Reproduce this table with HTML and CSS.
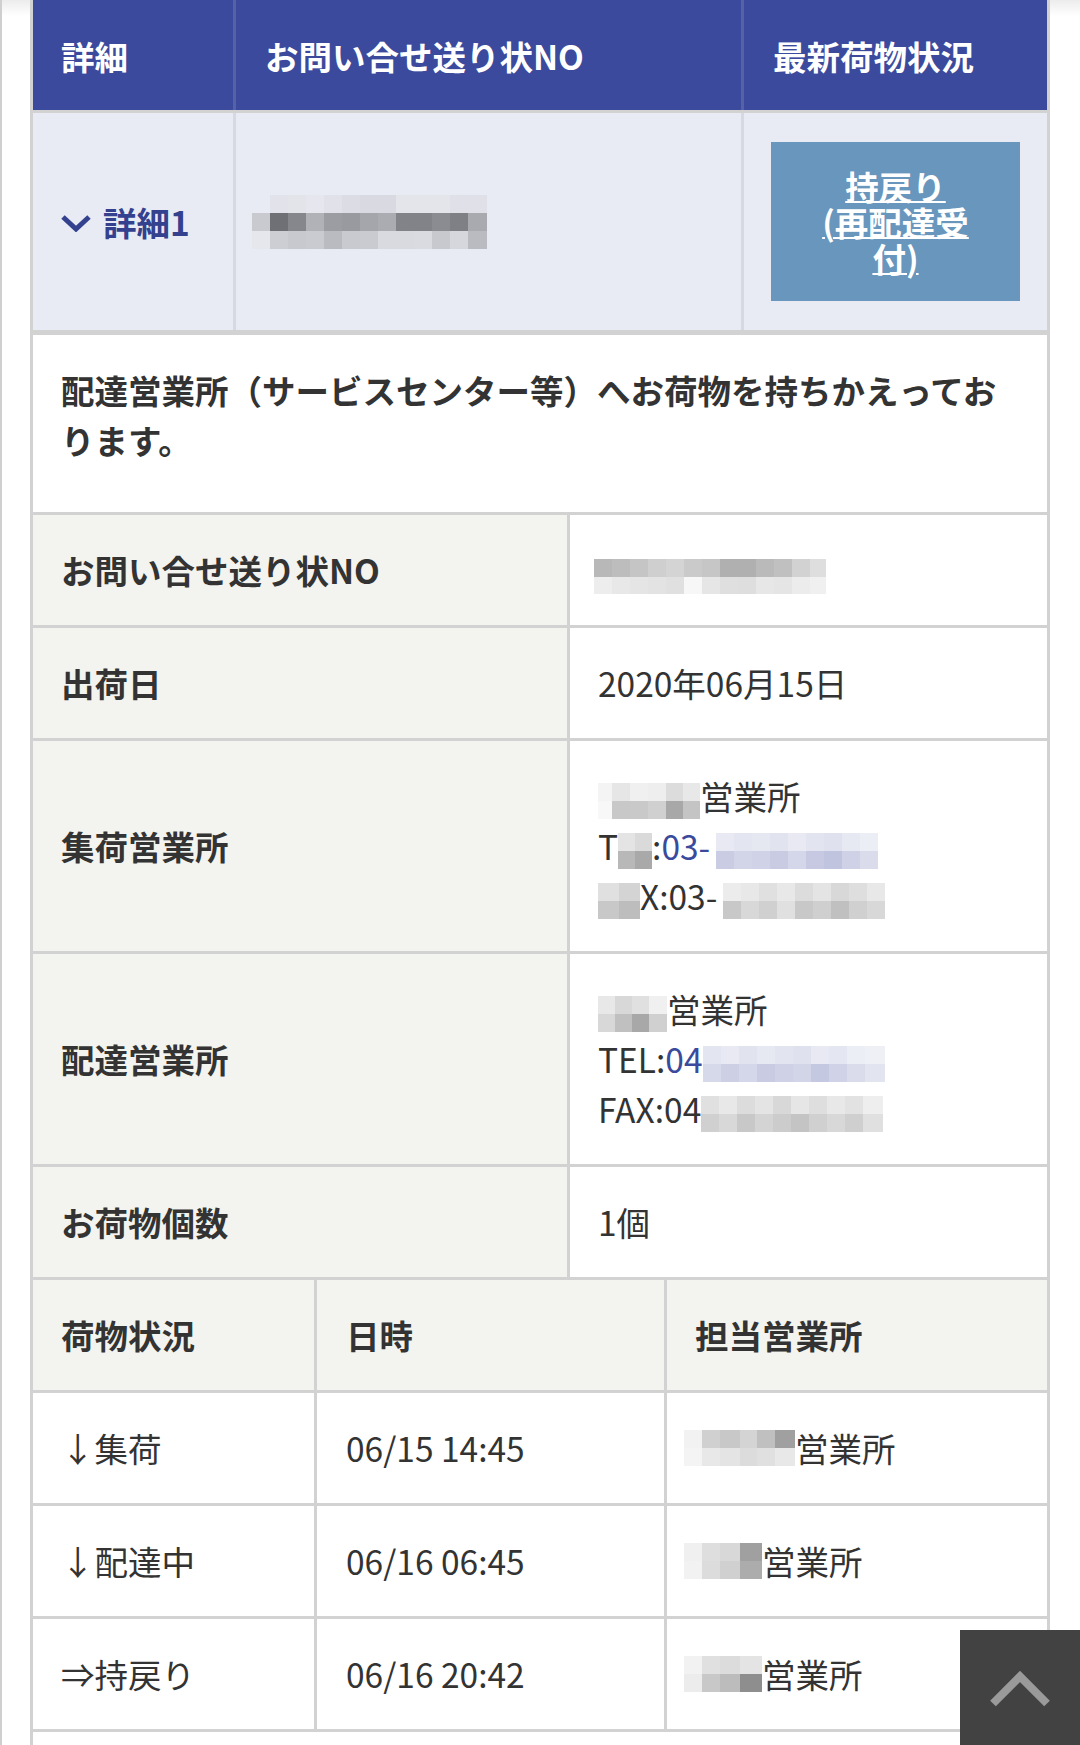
FILE: index.html
```html
<!DOCTYPE html>
<html lang="ja">
<head>
<meta charset="utf-8">
<title>お問い合せ結果</title>
<link rel="stylesheet" href="styles.css">
</head>
<body>
<div class="page">
  <div class="wrap">
    <div class="sum-head">
      <div class="hcell">詳細</div>
      <div class="hcell">お問い合せ送り状NO</div>
      <div class="hcell">最新荷物状況</div>
    </div>
    <div class="sum-row">
      <div class="scell detail">
        <svg class="chev" width="30" height="18" viewBox="0 0 30 18"><polyline points="2,3 15,15 28,3" fill="none" stroke="#33418f" stroke-width="5"/></svg>
        <span>詳細1</span>
      </div>
      <div class="scell track"><span class="mz mz-track"></span></div>
      <div class="scell status">
        <a class="btn" href="#">持戻り<br>(再配達受付)</a>
      </div>
    </div>
    <div class="msg">配達営業所（サービスセンター等）へお荷物を持ちかえっております。</div>
    <div class="def">
      <div class="lbl">お問い合せ送り状NO</div>
      <div class="val"><span class="mz mz-inv"></span></div>
      <div class="lbl">出荷日</div>
      <div class="val">2020年06月15日</div>
      <div class="lbl">集荷営業所</div>
      <div class="val"><div><span class="mz mz-a1"></span>営業所<br>T<span class="mz mz-a2l"></span>:<a class="tel" href="#">03-</a><span class="mz mz-a2r"></span><br><span class="mz mz-a3l"></span>X:03-<span class="mz mz-a3r"></span></div></div>
      <div class="lbl">配達営業所</div>
      <div class="val"><div><span class="mz mz-b1"></span>営業所<br>TEL:<a class="tel" href="#">04</a><span class="mz mz-b2"></span><br>FAX:04<span class="mz mz-b3"></span></div></div>
      <div class="lbl">お荷物個数</div>
      <div class="val">1個</div>
    </div>
    <div class="hist">
      <div class="th">荷物状況</div>
      <div class="th">日時</div>
      <div class="th">担当営業所</div>
      <div class="td">↓集荷</div>
      <div class="td">06/15 14:45</div>
      <div class="td"><span class="mz mz-c1"></span>営業所</div>
      <div class="td">↓配達中</div>
      <div class="td">06/16 06:45</div>
      <div class="td"><span class="mz mz-c2"></span>営業所</div>
      <div class="td">⇒持戻り</div>
      <div class="td">06/16 20:42</div>
      <div class="td"><span class="mz mz-c3"></span>営業所</div>
    </div>
    <div class="after"></div>
  </div>
</div>
<a class="totop" href="#" aria-label="ページトップへ">
  <svg width="120" height="115" viewBox="0 0 120 115"><polyline points="33,73.5 60,46.5 87,73.5" fill="none" stroke="#9a9a9a" stroke-width="8" stroke-linejoin="miter"/></svg>
</a>
</body>
</html>
```
FILE: styles.css
```css
html, body {
  margin: 0;
  padding: 0;
}
body {
  background: linear-gradient(#ececec, #ffffff 16px) no-repeat, #fff;
  font-family: "Noto Sans CJK JP", "Noto Sans", sans-serif;
  font-size: 33.5px;
  color: #333;
  border-left: 2px solid #cfcfcf;
  min-height: 1745px;
}
.page {
  padding: 0 30px 0 28px;
}
.wrap {
  border-left: 3px solid #d2d2d2;
  border-right: 3px solid #d2d2d2;
}

/* summary header */
.sum-head {
  display: grid;
  grid-template-columns: 200px 505px 303px;
  column-gap: 3px;
  background: #5562a8;
  height: 110px;
  border-bottom: 3px solid #d2d2d2;
}
.hcell {
  background: #3b4a9d;
  color: #fff;
  font-weight: 700;
  display: flex;
  align-items: center;
  padding: 0 29px;
}
.hcell:first-child {
  padding-left: 28px;
}

/* summary row */
.sum-row {
  display: grid;
  grid-template-columns: 200px 505px 303px;
  column-gap: 3px;
  background: #d6d9e1;
  height: 217px;
  border-bottom: 5px solid #d2d2d2;
}
.scell {
  background: #e8ebf3;
  display: flex;
  align-items: center;
}
.detail {
  padding-left: 28px;
  color: #33418f;
  font-weight: 700;
}
.chev {
  margin-right: 12px;
  margin-top: 2px;
}
.track {
  padding-left: 16px;
}
.status {
  justify-content: center;
}
.btn {
  width: 249px;
  height: 159px;
  box-sizing: border-box;
  background: #6896bd;
  color: #fff;
  font-weight: 700;
  text-decoration: underline;
  text-decoration-thickness: 2px;
  text-underline-offset: 1px;
  display: flex;
  align-items: center;
  justify-content: center;
  text-align: center;
  line-height: 36px;
  padding: 0 40px;
}

/* message */
.msg {
  background: #fff;
  padding: 30px 28px 47px;
  line-height: 50px;
  font-weight: 700;
  border-bottom: 3px solid #d2d2d2;
}

/* definition table */
.def {
  display: grid;
  grid-template-columns: 534px 477px;
  gap: 3px;
  background: #d2d2d2;
  border-bottom: 3px solid #d2d2d2;
}
.lbl, .val {
  padding: 30px 28px;
  line-height: 50px;
  display: flex;
  align-items: center;
  min-height: 50px;
}
.lbl {
  background: #f3f3ef;
  font-weight: 700;
}
.val {
  background: #fff;
}
.tel {
  color: #3a4a9c;
  text-decoration: none;
}

/* history table */
.hist {
  display: grid;
  grid-template-columns: 281px 347px 380px;
  gap: 3px;
  background: #d2d2d2;
  border-bottom: 3px solid #d2d2d2;
}
.th, .td {
  padding: 30px 28px;
  line-height: 50px;
  height: 50px;
  display: flex;
  align-items: center;
  white-space: nowrap;
}
.th {
  background: #f3f3ef;
  font-weight: 700;
}
.td {
  background: #fff;
}
.hist .th:nth-child(2), .hist .td:nth-child(3n+2) {
  padding-left: 29px;
}
.after {
  height: 110px;
  background: #fff;
}

/* mosaic blocks (censored values) */
.mz {
  display: inline-block;
  vertical-align: middle;
}
.mz-track {
  width: 235px;
  height: 54px;
  background:
    linear-gradient(90deg, #e8ebf3 0 18px, #e2e3ea 18px 36px, #e3e4ea 36px 54px, #e6e7ee 54px 72px, #e1e2e9 72px 90px, #dcdde4 90px 108px, #d9dae1 108px 144px, #e4e5eb 144px 198px, #e0e1e8 198px 235px) 0 0 / 100% 18px no-repeat,
    linear-gradient(90deg, #c9cacf 0 18px, #6f7075 18px 36px, #86878c 36px 54px, #b1b2b7 54px 72px, #9c9da2 72px 90px, #999a9f 90px 108px, #a5a6ab 108px 126px, #abacb1 126px 144px, #828388 144px 180px, #8b8c91 180px 198px, #7f8085 198px 216px, #a9aab0 216px 235px) 0 18px / 100% 18px no-repeat,
    linear-gradient(90deg, #e6e7ed 0 18px, #cdced3 18px 36px, #c8c9cf 36px 54px, #cacbd0 54px 72px, #babbc0 72px 90px, #c9cad0 90px 108px, #cacbd0 108px 126px, #d9dae0 126px 162px, #dadbe1 162px 180px, #c8c9cf 180px 198px, #d6d7dd 198px 216px, #babbc0 216px 235px) 0 36px / 100% 18px no-repeat;
}
.mz-inv {
  width: 232px;
  height: 35px;
  margin-top: 12px;
  margin-left: -4px;
  background:
    linear-gradient(90deg, #b8b8b8 0 18px, #bdbdbd 18px 36px, #c5c5c5 36px 54px, #cfcfcf 54px 72px, #d4d4d4 72px 90px, #cacaca 90px 108px, #c6c6c6 108px 126px, #b0b0b0 126px 162px, #bababa 162px 180px, #c0c0c0 180px 198px, #d2d2d2 198px 216px, #dedede 216px 232px) 0 0 / 100% 18px no-repeat,
    linear-gradient(90deg, #ededed 0 18px, #e8e8e8 18px 36px, #e5e5e5 36px 54px, #e3e3e3 54px 72px, #e0e0e0 72px 90px, #f7f7f7 90px 108px, #e6e6e6 108px 126px, #dfdfdf 126px 144px, #dedede 144px 162px, #e7e7e7 162px 180px, #e5e5e5 180px 198px, #ececec 198px 216px, #f0f0f0 216px 232px) 0 18px / 100% 17px no-repeat;
}
.mz-a1 {
  width: 102px;
  height: 36px;
  background:
    linear-gradient(90deg, #f4f4f4 0 14px, #e6e6e6 14px 32px, #f0f0f0 32px 50px, #eeeeee 50px 68px, #dcdcdc 68px 85px, #e8e8e8 85px 102px) 0 0 / 100% 18px no-repeat,
    linear-gradient(90deg, #f8f8f8 0 14px, #c8c8c8 14px 32px, #c9c9c9 32px 50px, #d0d0d0 50px 68px, #a8a8a8 68px 85px, #c4c4c4 85px 102px) 0 18px / 100% 18px no-repeat;
}
.mz-a2l {
  width: 34px;
  height: 36px;
  background:
    linear-gradient(90deg, #e4e4e4 0 17px, #dadada 17px 34px) 0 0 / 100% 18px no-repeat,
    linear-gradient(90deg, #b8b8b8 0 17px, #a9a9a9 17px 34px) 0 18px / 100% 18px no-repeat;
}
.mz-a2r {
  width: 162px;
  height: 36px;
  margin-left: 6px;
  background:
    linear-gradient(90deg, #e8e9f2 0 18px, #e3e5f0 18px 36px, #e5e7f1 36px 54px, #e1e3ef 54px 72px, #e8e9f3 72px 90px, #e2e4f0 90px 108px, #dfe1ee 108px 126px, #e6e8f2 126px 144px, #eceef5 144px 162px) 0 0 / 100% 18px no-repeat,
    linear-gradient(90deg, #c9cce3 0 18px, #d2d5e8 18px 36px, #d0d3e7 36px 54px, #c8cbe2 54px 72px, #d4d6e9 72px 90px, #c6c9e1 90px 108px, #c0c4df 108px 126px, #cfd2e6 126px 144px, #dadcec 144px 162px) 0 18px / 100% 18px no-repeat;
}
.mz-a3l {
  width: 42px;
  height: 36px;
  background:
    linear-gradient(90deg, #e0e0e0 0 21px, #d4d4d4 21px 42px) 0 0 / 100% 18px no-repeat,
    linear-gradient(90deg, #c8c8c8 0 21px, #bdbdbd 21px 42px) 0 18px / 100% 18px no-repeat;
}
.mz-a3r {
  width: 162px;
  height: 36px;
  margin-left: 6px;
  background:
    linear-gradient(90deg, #ececec 0 18px, #e8e8e8 18px 36px, #e0e0e0 36px 54px, #e8e8e8 54px 72px, #dcdcdc 72px 90px, #e4e4e4 90px 108px, #d8d8d8 108px 126px, #dedede 126px 144px, #e8e8e8 144px 162px) 0 0 / 100% 18px no-repeat,
    linear-gradient(90deg, #c8c8c8 0 18px, #d8d8d8 18px 36px, #d0d0d0 36px 54px, #e0e0e0 54px 72px, #c8c8c8 72px 90px, #cfcfcf 90px 108px, #c0c0c0 108px 126px, #d0d0d0 126px 144px, #d8d8d8 144px 162px) 0 18px / 100% 18px no-repeat;
}
.mz-b1 {
  width: 69px;
  height: 36px;
  background:
    linear-gradient(90deg, #e8e8e8 0 17px, #d8d8d8 17px 34px, #e0e0e0 34px 51px, #f0f0f0 51px 69px) 0 0 / 100% 18px no-repeat,
    linear-gradient(90deg, #d8d8d8 0 17px, #c0c0c0 17px 34px, #a8a8a8 34px 51px, #d0d0d0 51px 69px) 0 18px / 100% 18px no-repeat;
}
.mz-b2 {
  width: 182px;
  height: 36px;
  background:
    linear-gradient(90deg, #e3e5f0 0 18px, #e8e9f3 18px 36px, #e1e3ef 36px 54px, #e6e8f2 54px 72px, #e2e4f0 72px 90px, #dfe1ee 90px 108px, #e8e9f2 108px 126px, #e4e6f1 126px 144px, #eceef5 144px 162px, #eef0f6 162px 182px) 0 0 / 100% 18px no-repeat,
    linear-gradient(90deg, #d6d9ea 0 18px, #cdd0e5 18px 36px, #d4d6e9 36px 54px, #c8cbe2 54px 72px, #cfd2e6 72px 90px, #d2d5e8 90px 108px, #c4c8e0 108px 126px, #d0d3e7 126px 144px, #dadcec 144px 162px, #e2e4f0 162px 182px) 0 18px / 100% 18px no-repeat;
}
.mz-b3 {
  width: 182px;
  height: 36px;
  background:
    linear-gradient(90deg, #e0e0e0 0 18px, #e8e8e8 18px 36px, #dcdcdc 36px 54px, #e4e4e4 54px 72px, #d8d8d8 72px 90px, #e6e6e6 90px 108px, #dedede 108px 126px, #e8e8e8 126px 144px, #e2e2e2 144px 162px, #eeeeee 162px 182px) 0 0 / 100% 18px no-repeat,
    linear-gradient(90deg, #d0d0d0 0 18px, #d8d8d8 18px 36px, #c8c8c8 36px 54px, #d4d4d4 54px 72px, #cccccc 72px 90px, #c4c4c4 90px 108px, #d0d0d0 108px 126px, #d8d8d8 126px 144px, #cfcfcf 144px 162px, #e0e0e0 162px 182px) 0 18px / 100% 18px no-repeat;
}
.mz-c1 {
  width: 111px;
  height: 36px;
  margin-left: -11px;
  background:
    linear-gradient(90deg, #f2f2f2 0 18px, #d0d0d0 18px 36px, #c8c8c8 36px 56px, #d4d4d4 56px 73px, #c0c0c0 73px 91px, #a0a0a0 91px 111px) 0 0 / 100% 18px no-repeat,
    linear-gradient(90deg, #f4f4f4 0 18px, #e8e8e8 18px 36px, #e4e4e4 36px 56px, #dcdcdc 56px 73px, #e0e0e0 73px 91px, #e8e8e8 91px 111px) 0 18px / 100% 18px no-repeat;
}
.mz-c2 {
  width: 78px;
  height: 36px;
  margin-left: -11px;
  background:
    linear-gradient(90deg, #f0f0f0 0 18px, #dedede 18px 36px, #d8d8d8 36px 56px, #a0a0a0 56px 78px) 0 0 / 100% 18px no-repeat,
    linear-gradient(90deg, #f2f2f2 0 18px, #dcdcdc 18px 36px, #d0d0d0 36px 56px, #acacac 56px 78px) 0 18px / 100% 18px no-repeat;
}
.mz-c3 {
  width: 78px;
  height: 36px;
  margin-left: -11px;
  background:
    linear-gradient(90deg, #f2f2f2 0 18px, #e0e0e0 18px 36px, #dcdcdc 36px 56px, #e4e4e4 56px 78px) 0 0 / 100% 18px no-repeat,
    linear-gradient(90deg, #ececec 0 18px, #c8c8c8 18px 36px, #bcbcbc 36px 56px, #8e8e8e 56px 78px) 0 18px / 100% 18px no-repeat;
}

/* back to top */
.totop {
  position: fixed;
  right: 0;
  bottom: 0;
  width: 120px;
  height: 115px;
  background: #424242;
  display: block;
}
.totop svg {
  display: block;
}
```
